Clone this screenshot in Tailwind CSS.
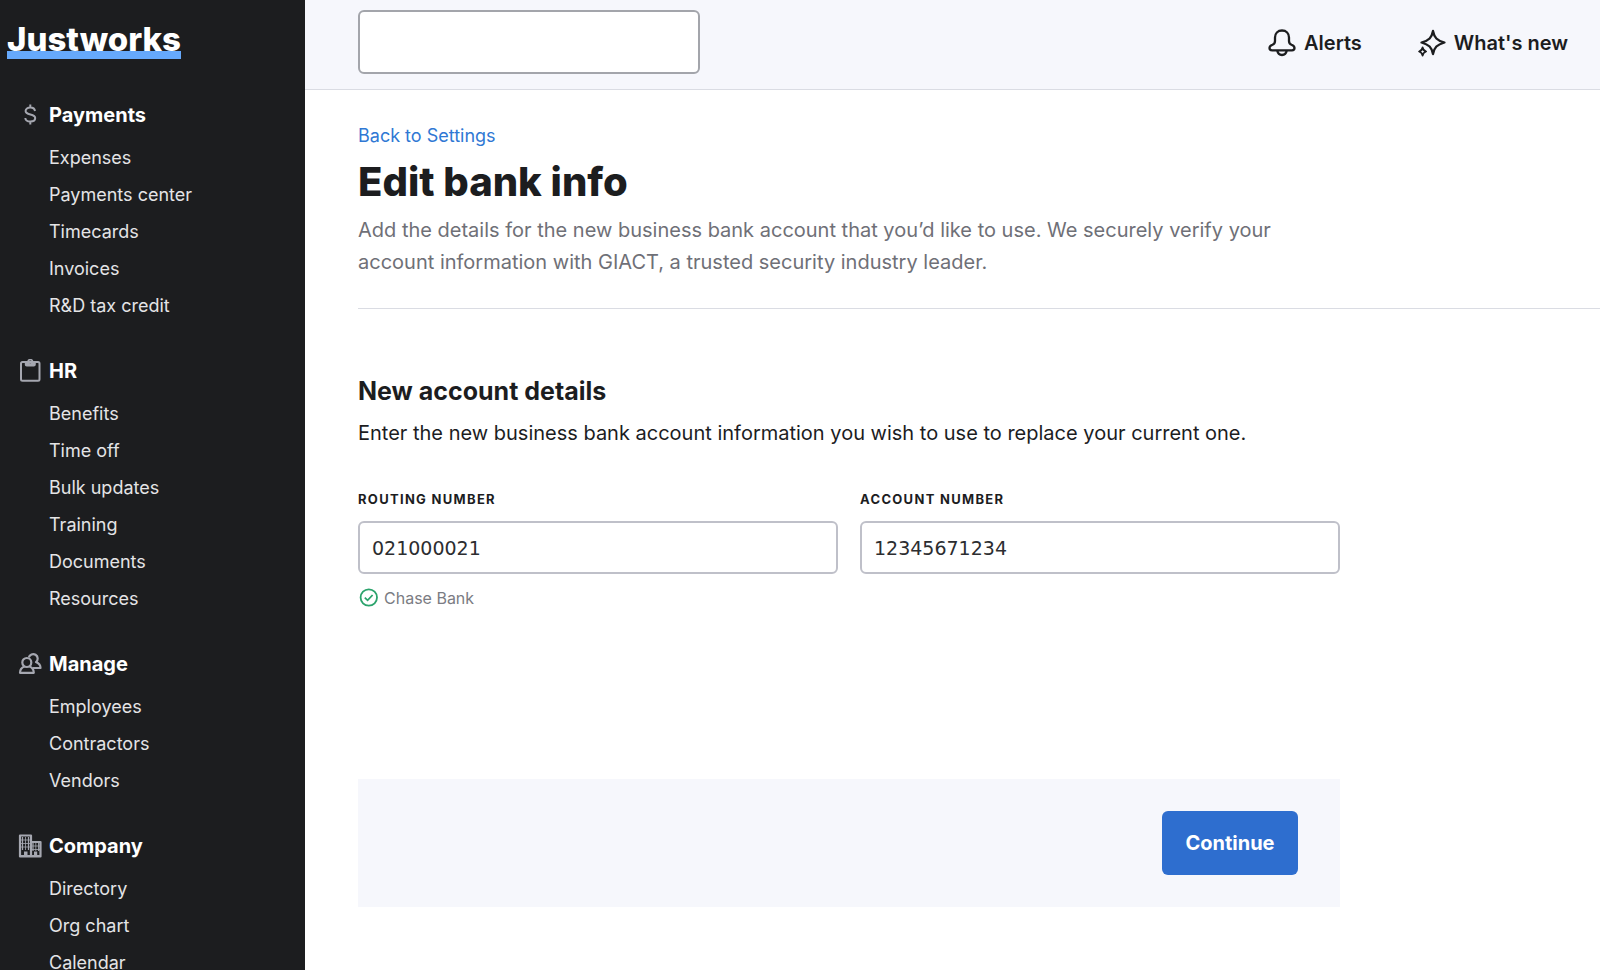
<!DOCTYPE html>
<html lang="en">
  <head>
    <meta charset="UTF-8" />
    <meta name="viewport" content="width=device-width, initial-scale=1.0" />
    <title>Edit bank info | Justworks</title>
    <script src="https://cdn.jsdelivr.net/npm/@tailwindcss/browser@4"></script>
  </head>
  <body class="flex h-screen overflow-hidden bg-white font-['Inter',sans-serif] text-[#1c1d1f]">
    <!-- Sidebar -->
    <aside class="w-[305px] shrink-0 overflow-hidden bg-[#1c1d1f] text-[#e4e4e6]">
      <div class="h-[91px] pt-6 pl-[7px]">
        <a href="#" class="inline-block h-[35px] border-b-8 border-[#66a9fb] text-[33px] leading-[31px] font-extrabold text-white">Justworks</a>
      </div>

      <nav class="text-lg leading-[37px]">
        <section class="mb-[23px]">
          <h2 class="flex h-12 items-center gap-[7px] pl-[18px] text-xl font-bold text-white">
            <svg class="size-6 text-[#a5a7b0]" viewBox="0 0 24 24" fill="none" stroke="currentColor" stroke-width="2">
              <path d="M12.300 1.500v3M12.300 18.500v3M17 8C16.700 5.800 15 4.500 12.300 4.500S7.600 6 7.600 8c0 4.500 9.600 2.500 9.600 7 0 2.200-2 3.500-4.900 3.500s-4.800-1.300-5-3.500" />
            </svg>
            Payments
          </h2>
          <ul class="pl-[49px]">
            <li><a href="#">Expenses</a></li>
            <li><a href="#">Payments center</a></li>
            <li><a href="#">Timecards</a></li>
            <li><a href="#">Invoices</a></li>
            <li><a href="#">R&amp;D tax credit</a></li>
          </ul>
        </section>

        <section class="mb-[23px]">
          <h2 class="flex h-12 items-center gap-[7px] pl-[18px] text-xl font-bold text-white">
            <svg class="size-6 text-[#a5a7b0]" viewBox="0 0 24 24" fill="none" stroke="currentColor">
              <rect x="3" y="3" width="18.500" height="18.800" rx="1.500" stroke-width="2" />
              <path fill="currentColor" fill-rule="evenodd" stroke="none" d="M6.800 2.200h2.400a3.200 3.200 0 0 1 6.200 0h2.400v3.200c0 1.200-1 2-2 2H8.800c-1.200 0-2-.8-2-2zM12.300 1.500a1.400 1.400 0 1 0 0 2.800 1.400 1.400 0 0 0 0-2.800z" />
            </svg>
            HR
          </h2>
          <ul class="pl-[49px]">
            <li><a href="#">Benefits</a></li>
            <li><a href="#">Time off</a></li>
            <li><a href="#">Bulk updates</a></li>
            <li><a href="#">Training</a></li>
            <li><a href="#">Documents</a></li>
            <li><a href="#">Resources</a></li>
          </ul>
        </section>

        <section class="mb-[23px]">
          <h2 class="flex h-12 items-center gap-[7px] pl-[18px] text-xl font-bold text-white">
            <svg class="size-6 text-[#a5a7b0]" viewBox="0 0 24 24" fill="none" stroke="currentColor" stroke-width="2.200" stroke-linejoin="round">
              <circle cx="8.800" cy="10.500" r="4.500" />
              <path d="M6.500 14.500C3.500 15.600 2 17.800 2 20.800h13.800c0-3-1.500-5.200-4.300-6.300" />
              <path d="M10.800 5.600a4.500 4.500 0 1 1 7.200 4.500C20.800 11.300 22.500 13.300 22.500 16h-7.800" />
            </svg>
            Manage
          </h2>
          <ul class="pl-[49px]">
            <li><a href="#">Employees</a></li>
            <li><a href="#">Contractors</a></li>
            <li><a href="#">Vendors</a></li>
          </ul>
        </section>

        <section>
          <h2 class="flex h-12 items-center gap-[7px] pl-[18px] text-xl font-bold text-white">
            <svg class="size-6 text-[#a5a7b0]" viewBox="0 0 24 24" fill="none" stroke="currentColor">
              <path stroke-width="2.200" stroke-linejoin="round" d="M2 1.500h11v21H2zM13 8h9.500v14.500H13" />
              <path stroke-width="0.800" d="M7.500 3v13M3 6h9M3 9.500h9M3 13h9M17.800 9v8M14 12h8M14 15.500h8" />
              <path stroke-width="1.200" d="M4.500 3v13M10.500 3v13M15 9v8M20.700 9v8" />
              <path fill="currentColor" stroke="none" d="M2.500 23v-2H6v-3.500h3.500V21H16v-3.500h3.200V21h3.300v2z" />
            </svg>
            Company
          </h2>
          <ul class="pl-[49px]">
            <li><a href="#">Directory</a></li>
            <li><a href="#">Org chart</a></li>
            <li><a href="#">Calendar</a></li>
          </ul>
        </section>
      </nav>
    </aside>

    <div class="min-w-0 flex-1">
      <!-- Top bar -->
      <header class="flex h-[90px] items-start justify-between border-b border-[#dadce3] bg-[#f6f7fc] pt-[10px] pr-8 pl-[53px]">
        <input type="search" aria-label="Search" class="h-16 w-[342px] rounded-md border-2 border-[#a3a5ab] bg-white px-3 text-lg" />
        <div class="flex h-[66px] items-center gap-14 text-xl font-semibold">
          <button type="button" class="flex items-center gap-2">
            <svg class="size-7" viewBox="0 0 28 28" fill="none" stroke="currentColor" stroke-width="2.300" stroke-linejoin="round">
              <path d="M14 1.500C9.800 1.500 7 4.500 7 8.500V12c0 2-.7 3-2.500 3.800-1.700.7-3 1.500-3 3.200 0 1.500 1 2.300 2.500 2.300h20c1.500 0 2.500-.8 2.500-2.300 0-1.700-1.300-2.500-3-3.200C21.700 15 21 14 21 12V8.500c0-4-2.800-7-7-7z" />
              <path d="M9.300 21.500c.5 3 2.400 4.500 4.700 4.500s4.200-1.500 4.700-4.500" />
            </svg>
            Alerts
          </button>
          <button type="button" class="flex items-center gap-2">
            <svg class="size-7" viewBox="0 0 28 28" fill="none" stroke="currentColor" stroke-width="2.300" stroke-linejoin="round">
              <path d="M15 2c1.200 6.500 4 9.500 11.500 11.500-7.500 2-10.300 5-11.500 11.500C13.800 18.500 11 15.500 3.500 13.500 11 11.500 13.800 8.500 15 2z" />
              <path stroke-width="1.800" d="M4.600 18.500c.4 2.200 1.300 3.300 3.500 4-2.200.7-3.100 1.800-3.500 4-.4-2.200-1.300-3.300-3.500-4 2.200-.7 3.100-1.800 3.500-4z" />
            </svg>
            What's new
          </button>
        </div>
      </header>

      <main class="pl-[53px]">
        <div class="border-b border-[#dadce3] pt-8 pb-[30px]">
          <a href="#" class="block text-lg leading-7 text-[#2f78d4]">Back to Settings</a>
          <h1 class="pt-2 text-[40px] leading-12 font-extrabold">Edit bank info</h1>
          <p class="pt-2 text-xl leading-8 text-[#6f7077]">
            Add the details for the new business bank account that you’d like to use. We securely verify your<br />
            account information with GIACT, a trusted security industry leader.
          </p>
        </div>

        <!-- Account form -->
        <form class="max-w-[982px] pt-[66px]">
          <h2 class="text-[25px] leading-8 font-bold">New account details</h2>
          <p class="pt-[10px] text-xl leading-8">Enter the new business bank account information you wish to use to replace your current one.</p>

          <div class="grid grid-cols-2 gap-[22px] pt-10">
            <div>
              <label for="routing" class="block text-[13px] leading-5 font-bold tracking-widest uppercase">Routing number</label>
              <input id="routing" type="text" value="021000021" class="mt-3 h-[53px] w-full rounded-md border-2 border-[#bfc0c9] px-3 font-['DejaVu_Sans',sans-serif] text-[19px] text-[#2c2d30]" />
              <p class="mt-3 flex items-center gap-[6px] text-base leading-6 text-[#7b7c83]">
                <svg class="size-5 text-[#2ba36c]" viewBox="0 0 20 20" fill="none" stroke="currentColor" stroke-width="1.800">
                  <circle cx="10.800" cy="9.500" r="8.200" />
                  <path d="M6.800 9.700l2.800 2.600 5-5.300" />
                </svg>
                Chase Bank
              </p>
            </div>
            <div>
              <label for="account" class="block text-[13px] leading-5 font-bold tracking-widest uppercase">Account number</label>
              <input id="account" type="text" value="12345671234" class="mt-3 h-[53px] w-full rounded-md border-2 border-[#bfc0c9] px-3 font-['DejaVu_Sans',sans-serif] text-[19px] text-[#2c2d30]" />
            </div>
          </div>

          <div class="mt-[169px] flex justify-end bg-[#f6f7fc] py-8 pr-[42px]">
            <button type="submit" class="h-16 w-[136px] rounded-md bg-[#2e6ecf] text-xl font-bold text-white">Continue</button>
          </div>
        </form>
      </main>
    </div>
  </body>
</html>
